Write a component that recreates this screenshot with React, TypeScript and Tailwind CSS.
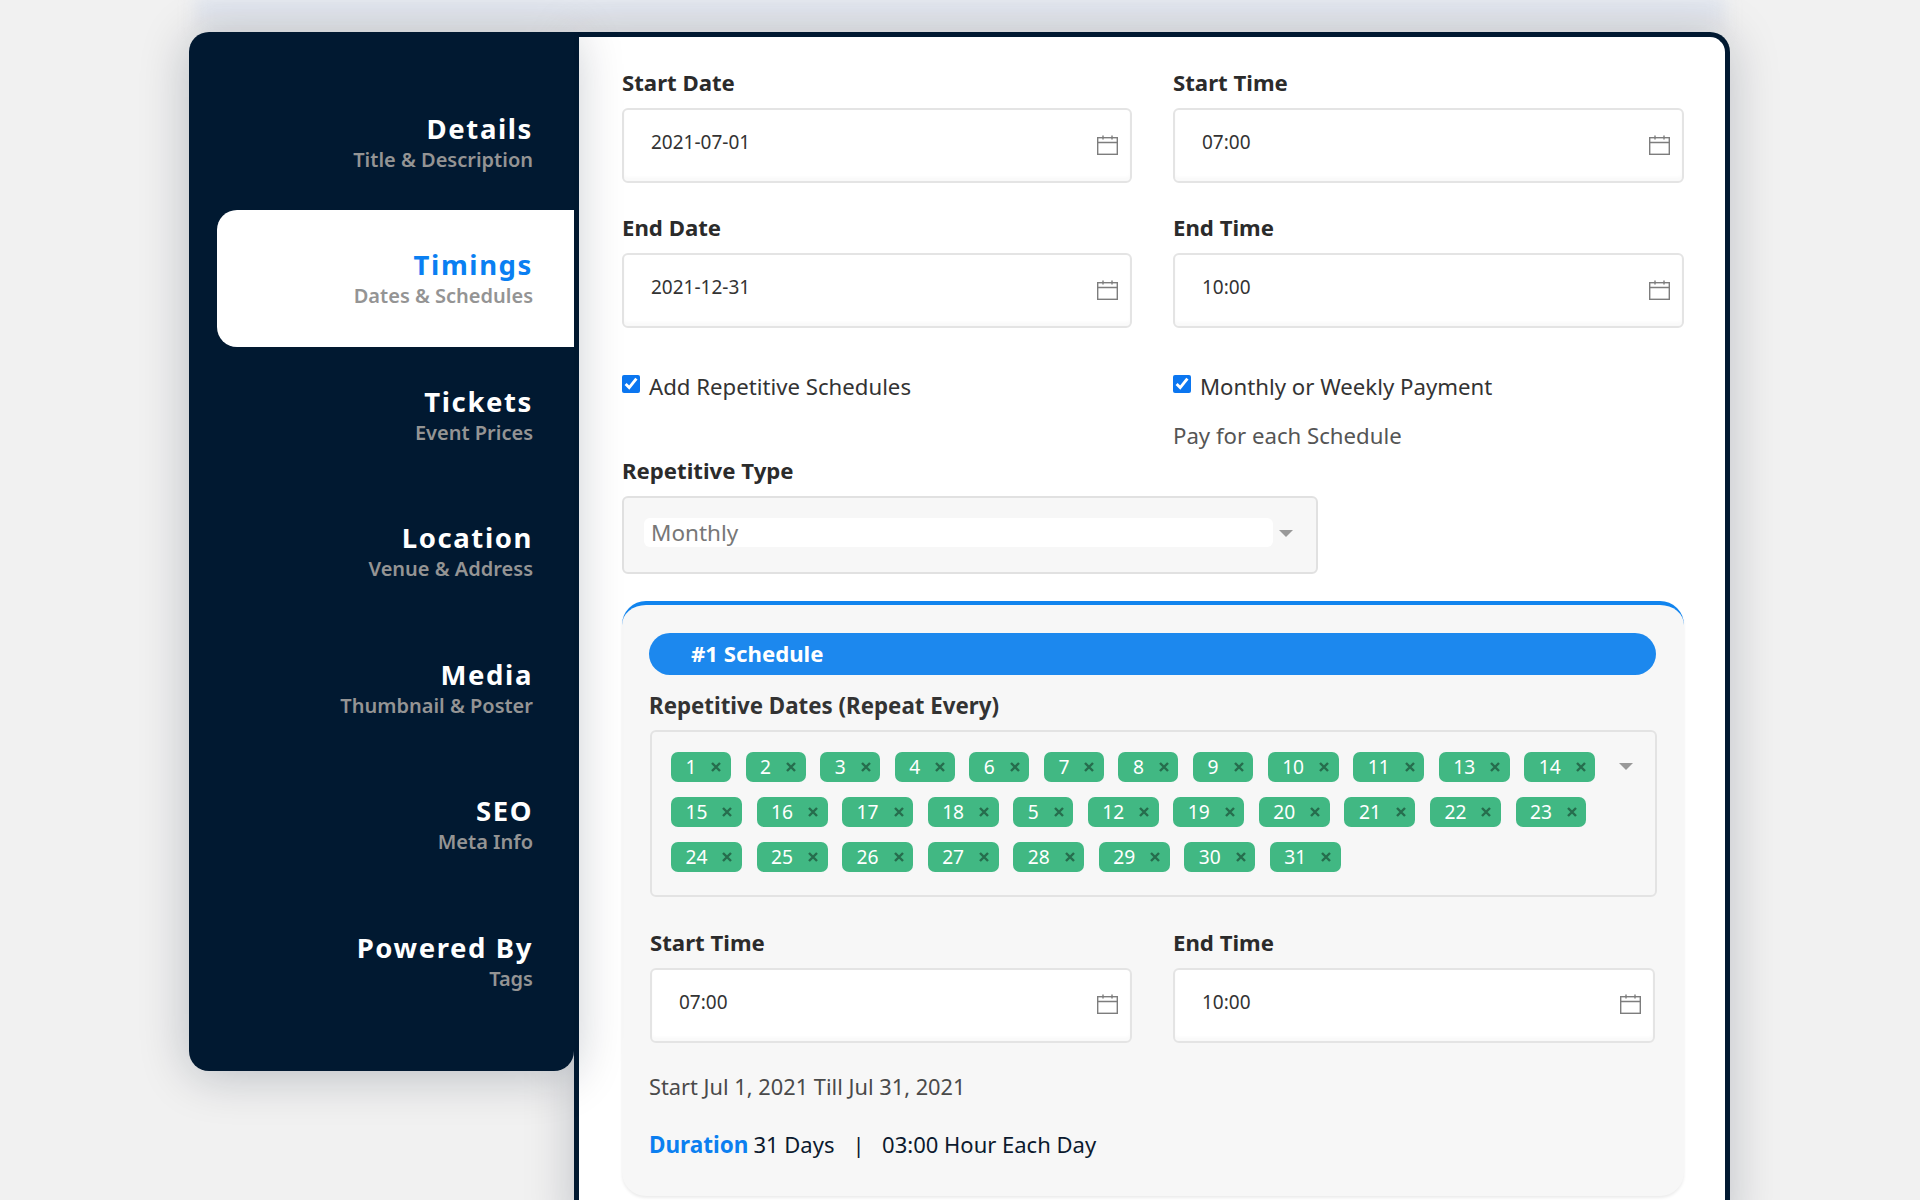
const navItems = [
  { title: "Details", sub: "Title & Description" },
  { title: "Timings", sub: "Dates & Schedules", active: true },
  { title: "Tickets", sub: "Event Prices" },
  { title: "Location", sub: "Venue & Address" },
  { title: "Media", sub: "Thumbnail & Poster" },
  { title: "SEO", sub: "Meta Info" },
  { title: "Powered By", sub: "Tags" },
];

const days = [1, 2, 3, 4, 6, 7, 8, 9, 10, 11, 13, 14, 15, 16, 17, 18, 5, 12, 19, 20, 21, 22, 23, 24, 25, 26, 27, 28, 29, 30, 31];

function CalendarIcon() {
  return (
    <svg width="21" height="20" viewBox="0 0 21 20" fill="none" stroke="#7d7d7d" strokeWidth="1.4" className="-mt-[2px]">
      <rect x="0.7" y="2.7" width="19.6" height="16.6" />
      <path d="M0.7 7.5H20.3M6 0.5V4.5M15 0.5V4.5" />
    </svg>
  );
}

function Arrow() {
  return <div className="w-0 h-0 border-x-[7px] border-x-transparent border-t-[7px] border-t-[#999999]" />;
}

function DateField({ label, value }: { label: string; value: string }) {
  return (
    <div>
      <div className="text-[22.2px] leading-[29px] font-bold text-[#2b2b2b] mb-[11px]">{label}</div>
      <div className="h-[75px] bg-white border-2 border-[#e4e4e4] rounded-[6px] shadow-[inset_0_-4px_3px_rgba(0,0,0,0.025)] flex items-center justify-between pl-[27px] pr-[12px]">
        <span className="text-[19px] text-[#333333] -mt-[6px]">{value}</span>
        <CalendarIcon />
      </div>
    </div>
  );
}

function Tag({ day }: { day: number }) {
  return (
    <div className="h-[30px] bg-[#41b883] rounded-[7px] pl-[14.5px] pr-[9.5px] flex items-center text-[19.2px] text-white">
      <span>{day}</span>
      <span className="ml-[15px] w-[10px] flex justify-center">
        <svg width="10" height="10" viewBox="0 0 10 10" stroke="#266d4d" strokeWidth="2.4">
          <path d="M1 1L9 9M9 1L1 9" />
        </svg>
      </span>
    </div>
  );
}

export default function App() {
  return (
    <div className="h-[1200px] overflow-hidden bg-[#f1f1f1] font-['Noto_Sans',sans-serif] relative">
      <div className="absolute -top-[2px] left-[195px] w-[1530px] h-[36px] blur-[8px] bg-gradient-to-b from-[#d9e2f2] via-[#e5e8ee] via-40% to-[#e5e6e8]" />
      <div className="relative flex ml-[189px] mt-[32px] w-[1541px]">
        <div className="relative z-10 w-[385px] h-[1039px] shrink-0 bg-[#011931] rounded-l-[20px] rounded-br-[20px] pt-[41.5px] pl-[28px] shadow-[0_4px_50px_rgba(0,20,40,0.24)]">
          {navItems.map((item) => (
            <div
              key={item.title}
              className={`h-[136.5px] pt-[1px] flex flex-col items-end justify-center pr-[41px] rounded-l-[20px] ${item.active ? "bg-white" : ""}`}
            >
              <div className={`text-[27.5px] leading-[34px] font-bold tracking-[1.6px] ${item.active ? "text-[#0a7ff2]" : "text-white"}`}>
                {item.title}
              </div>
              <div className="text-[20px] leading-[27px] font-semibold text-[#949494]">{item.sub}</div>
            </div>
          ))}
        </div>

        <div className="w-[1156px] h-[1200px] bg-white border-[5px] border-b-0 border-[#011931] rounded-tr-[20px] pl-[43px] pr-[41px] pt-[31px] shadow-[0_4px_50px_rgba(0,20,40,0.22)]">
          <div className="grid grid-cols-[510px_511px] gap-x-[41px] gap-y-[30px]">
            <DateField label="Start Date" value="2021-07-01" />
            <DateField label="Start Time" value="07:00" />
            <DateField label="End Date" value="2021-12-31" />
            <DateField label="End Time" value="10:00" />
          </div>

          <div className="grid grid-cols-[510px_511px] gap-x-[41px] mt-[44px]">
            <label className="flex items-start gap-[9px] text-[22.2px] leading-[30px] text-[#333333]">
              <input type="checkbox" defaultChecked className="w-[18px] h-[18px] mt-[3px] accent-[#0b76f0]" />
              Add Repetitive Schedules
            </label>
            <div>
              <label className="flex items-start gap-[9px] text-[22.2px] leading-[30px] text-[#333333]">
                <input type="checkbox" defaultChecked className="w-[18px] h-[18px] mt-[3px] accent-[#0b76f0]" />
                Monthly or Weekly Payment
              </label>
              <div className="text-[22.2px] leading-[30px] text-[#555555] mt-[19px]">Pay for each Schedule</div>
            </div>
          </div>

          <div className="mt-[5px] text-[22.2px] leading-[30px] font-bold text-[#2b2b2b]">Repetitive Type</div>
          <div className="mt-[10px] w-[696px] h-[78px] bg-[#f7f7f7] border-2 border-[#e1e1e1] rounded-[6px] flex items-start pt-[20px] pl-[20px] pr-[23px]">
            <div className="flex-1 h-[29px] bg-white rounded-[6px] pl-[7px] text-[22.5px] leading-[29px] text-[#777777]">Monthly</div>
            <div className="ml-[6px] mt-[12px]">
              <Arrow />
            </div>
          </div>

          <div className="mt-[27px] h-[595px] bg-[#f7f7f7] border-t-4 border-[#1184ee] rounded-[24px] pl-[27px] pr-[27px] pt-[28px] shadow-[0_2px_3px_rgba(0,0,0,0.08)]">
            <div className="h-[42px] mr-[1px] bg-[#1c88ee] rounded-full pl-[42px] text-[22.2px] leading-[42px] font-bold text-white">#1 Schedule</div>
            <div className="mt-[16px] text-[22.3px] leading-[30px] font-bold text-[#333333]">Repetitive Dates (Repeat Every)</div>
            <div className="mt-[9px] ml-[1px] h-[167px] border-2 border-[#e3e3e3] rounded-[6px] pl-[19px] pr-[22px] pt-[20px] flex">
              <div className="flex-1 flex flex-wrap gap-x-[14.6px] gap-y-[15px] content-start">
                {days.map((d) => (
                  <Tag key={d} day={d} />
                ))}
              </div>
              <div className="mt-[11px] shrink-0">
                <Arrow />
              </div>
            </div>

            <div className="grid grid-cols-[482px_482px] gap-x-[41px] mt-[30.5px] pl-[1px]">
              <DateField label="Start Time" value="07:00" />
              <DateField label="End Time" value="10:00" />
            </div>

            <div className="mt-[29.5px] text-[21.8px] leading-[30px] text-[#4a4a4a]">Start Jul 1, 2021 Till Jul 31, 2021</div>
            <div className="mt-[27px] text-[22px] leading-[30px] text-[#0c1a2e] flex items-baseline">
              <span className="font-bold text-[22.5px] text-[#0b7ff0]">Duration</span>
              <span className="ml-[5px]">31 Days</span>
              <span className="ml-[18px]">|</span>
              <span className="ml-[17.5px]">03:00 Hour Each Day</span>
            </div>
          </div>
        </div>
      </div>
    </div>
  );
}
